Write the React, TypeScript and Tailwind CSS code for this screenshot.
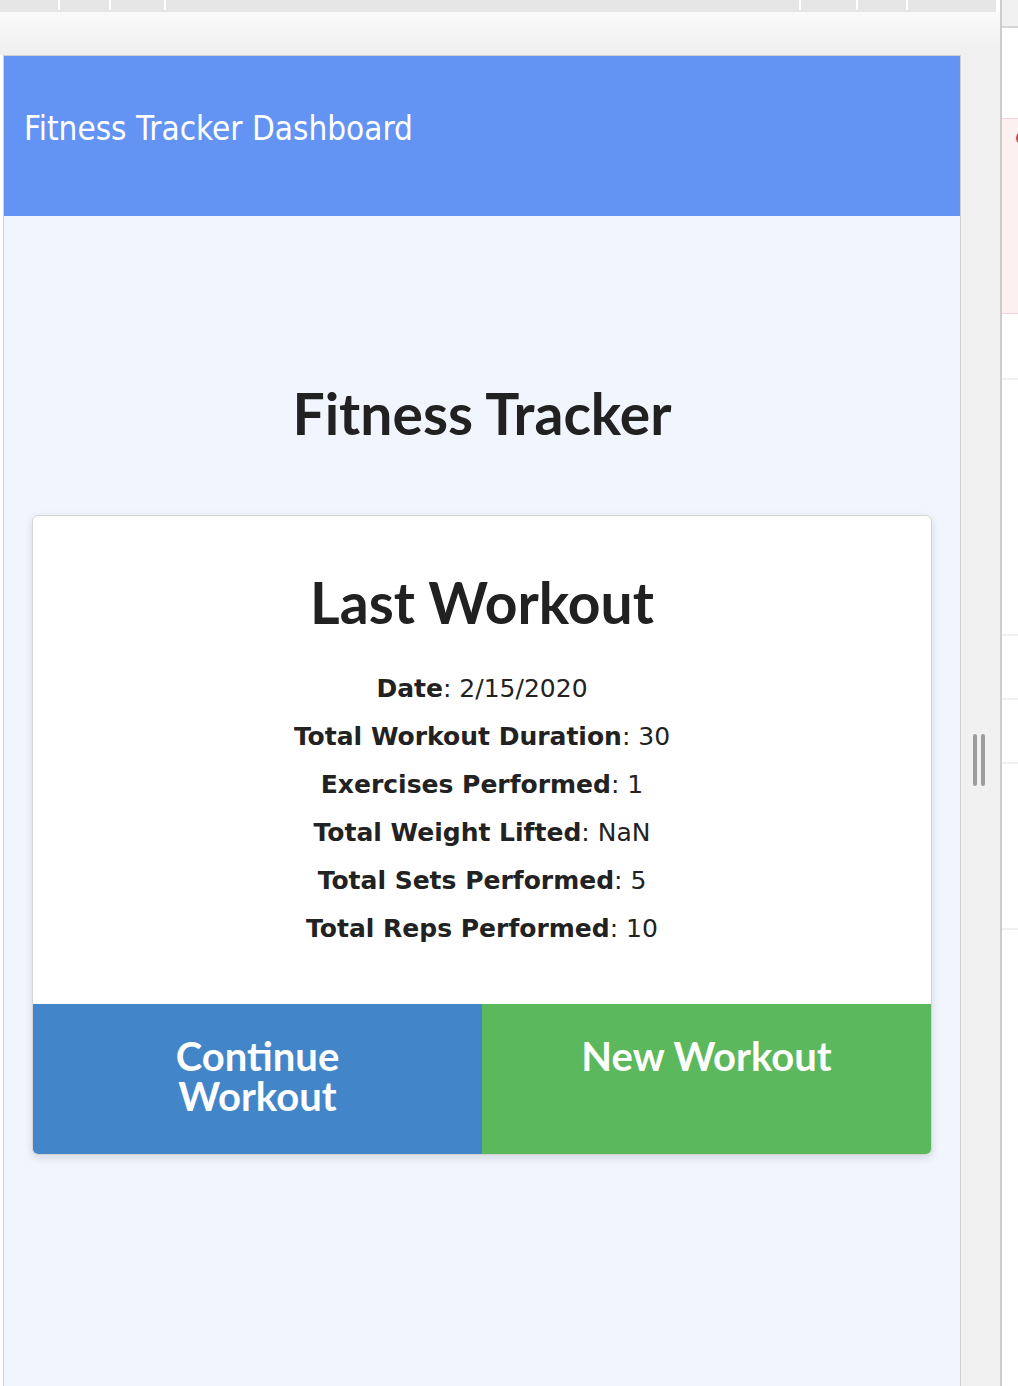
import React from "react";

const stats = [
    { label: "Date", value: "2/15/2020" },
    { label: "Total Workout Duration", value: "30" },
    { label: "Exercises Performed", value: "1" },
    { label: "Total Weight Lifted", value: "NaN" },
    { label: "Total Sets Performed", value: "5" },
    { label: "Total Reps Performed", value: "10" },
];

const ticks = [58, 109, 164, 799, 856, 906];

const tahoma = { fontFamily: '"DejaVu Sans Condensed", "DejaVu Sans", sans-serif' };
const verdana = { fontFamily: '"DejaVu Sans", sans-serif' };
const lato = { fontFamily: 'Lato, "Open Sans", sans-serif' };

export default function App() {
    return (
        <div className="flex w-[1018px] h-[1386px] overflow-hidden bg-white">
            {/* browser viewport area */}
            <div className="flex flex-col w-[1000px] shrink-0">
                <div className="relative h-[12px] w-[996px] bg-[#e6e6e6]">
                    {ticks.map((x) => (
                        <div key={x} className="absolute top-0 h-[10px] w-[2px] bg-white" style={{ left: x }} />
                    ))}
                </div>
                <div className="h-[43px] bg-gradient-to-b from-[#fafafa] to-[#efefef]" />

                <div className="flex flex-1">
                    <div className="ml-[3px] w-[958px] border border-b-0 border-[#cfcfcf] bg-[#f1f6fe] flex flex-col">
                        <header className="h-[160px] bg-[#6394f3] pl-[20px] pt-[54px]">
                            <h2 className="text-[33px] leading-[38px] text-white" style={tahoma}>Fitness Tracker Dashboard</h2>
                        </header>

                        <h1 className="mt-[169px] text-center text-[57px] font-bold leading-none text-[#212121]" style={lato}>
                            Fitness Tracker
                        </h1>

                        <div className="mx-[28px] mt-[73px] rounded-[6px] border border-[#d4d4d4] bg-white shadow-[0_3px_8px_rgba(0,0,0,0.12)] overflow-hidden">
                            <h3 className="mt-[58px] text-center text-[57px] font-bold leading-none text-[#212121]" style={lato}>
                                Last Workout
                            </h3>
                            <div className="mt-[34px] flex flex-col items-center text-[25px] leading-[48px] text-[#222]" style={verdana}>
                                {stats.map((s) => (
                                    <p key={s.label}>
                                        <span className="font-bold">{s.label}</span>: {s.value}
                                    </p>
                                ))}
                            </div>
                            <div className="mt-[51px] flex">
                                <button className="w-1/2 h-[150px] bg-[#4286c9] px-16 pt-8 text-white text-[40px] font-bold leading-[40px] flex justify-center items-start" style={lato}>
                                    <span className="max-w-[300px]">Continue Workout</span>
                                </button>
                                <button className="w-1/2 h-[150px] bg-[#5cb85c] px-16 pt-8 text-white text-[40px] font-bold leading-[40px] flex justify-center items-start" style={lato}>
                                    <span>New Workout</span>
                                </button>
                            </div>
                        </div>
                    </div>

                    {/* scroll gutter */}
                    <div className="relative w-[39px] bg-[#f1f1f1]">
                        <div className="absolute left-[12px] top-[679px] flex gap-[4px]">
                            <div className="w-[4px] h-[52px] rounded-full bg-[#9d9d9d]" />
                            <div className="w-[4px] h-[52px] rounded-full bg-[#9d9d9d]" />
                        </div>
                    </div>
                </div>
            </div>

            <div className="w-[2px] bg-[#cccccc] shrink-0" />

            {/* devtools panel edge */}
            <div className="flex-1 flex flex-col bg-white">
                <div className="h-[28px] bg-[#f0f0f0] border-b-2 border-[#d6d6d6]" />
                <div className="h-[90px]" />
                <div className="h-[196px] bg-[#fdf0f0] border-y border-[#f6d4d6] pt-[12px]">
                    <div className="ml-[14px] w-[14px] h-[14px] rounded-full bg-[#cf4352]" />
                </div>
                <div className="h-[64px]" />
                <div className="h-[2px] bg-[#f0f0f0]" />
                <div className="h-[254px]" />
                <div className="h-[2px] bg-[#f0f0f0]" />
                <div className="h-[62px]" />
                <div className="h-[2px] bg-[#f0f0f0]" />
                <div className="h-[62px]" />
                <div className="h-[2px] bg-[#f0f0f0]" />
                <div className="h-[164px]" />
                <div className="h-[2px] bg-[#f0f0f0]" />
            </div>
        </div>
    );
}
